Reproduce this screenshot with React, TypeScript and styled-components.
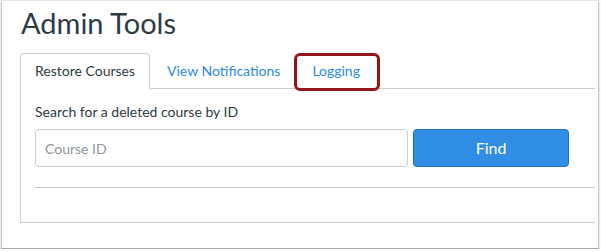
import React from 'react';
import styled, { createGlobalStyle } from 'styled-components';

const GlobalStyle = createGlobalStyle`
  html, body {
    margin: 0;
    padding: 0;
    background: #ffffff;
  }
  body {
    font-family: Lato, "Liberation Sans", sans-serif;
    -webkit-font-smoothing: antialiased;
  }
`;

const Frame = styled.div`
  box-sizing: border-box;
  margin-left: 1px;
  width: 598px;
  height: 249px;
  padding: 4px 3px 0 18px;
  background: #fff;
  border: 1px solid #c9c9c9;
  border-top-color: #e4e4e4;
  border-bottom-color: #a9a9a9;
  box-shadow: 0 1px 2px rgba(0, 0, 0, 0.25);
`;

const Title = styled.h1`
  margin: 0 0 0 1px;
  font-size: 29px;
  font-weight: 400;
  line-height: 36px;
  color: #2d3b45;
`;

const TabList = styled.div`
  display: flex;
  margin-top: 12px;
  border-bottom: 1px solid #c7cdd1;
`;

const Tab = styled.div<{ $active?: boolean }>`
  position: relative;
  margin-right: 2px;
  margin-bottom: -1px;
  padding: 7px 14px;
  font-size: 14px;
  line-height: 20px;
  color: ${p => (p.$active ? '#2d3b45' : '#2b8ae0')};
  border: 1px solid ${p => (p.$active ? '#c7cdd1' : 'transparent')};
  border-bottom-color: ${p => (p.$active ? '#fff' : 'transparent')};
  border-radius: 4px 4px 0 0;
  background: ${p => (p.$active ? '#fff' : 'transparent')};
`;

const Highlight = styled.span`
  position: absolute;
  top: -1px;
  left: -4px;
  right: -6px;
  bottom: -3px;
  border: 3px solid #931518;
  border-radius: 6px;
`;

const Panel = styled.div`
  box-sizing: border-box;
  height: 134px;
  padding: 13px 0 0 14px;
  border-left: 1px solid #c7cdd1;
  border-bottom: 1px solid #c7cdd1;
`;

const Label = styled.div`
  font-size: 14px;
  line-height: 20px;
  color: #2d3b45;
  margin-bottom: 7px;
`;

const SearchRow = styled.div`
  display: flex;
  gap: 5px;
`;

const Input = styled.input`
  box-sizing: border-box;
  width: 373px;
  height: 38px;
  padding: 0 9px;
  border: 1px solid #c7cdd1;
  border-radius: 4px;
  font-family: inherit;
  font-size: 14px;
  color: #2d3b45;
  outline: none;

  &::placeholder {
    color: #8b969e;
  }
`;

const FindButton = styled.button`
  box-sizing: border-box;
  width: 156px;
  height: 38px;
  padding: 0;
  background: #2f8ee3;
  border: 1px solid #2170b8;
  border-radius: 4px;
  color: #fff;
  font-family: inherit;
  font-size: 16px;
  line-height: 36px;
  cursor: pointer;
`;

const Divider = styled.hr`
  margin: 20px 0 0;
  border: 0;
  border-top: 1px solid #c7cdd1;
`;

const App: React.FC = () => (
  <>
    <GlobalStyle />
    <Frame>
      <Title>Admin Tools</Title>
      <TabList>
        <Tab $active>Restore Courses</Tab>
        <Tab>View Notifications</Tab>
        <Tab>
          Logging
          <Highlight />
        </Tab>
      </TabList>
      <Panel>
        <Label>Search for a deleted course by ID</Label>
        <SearchRow>
          <Input placeholder="Course ID" />
          <FindButton>Find</FindButton>
        </SearchRow>
        <Divider />
      </Panel>
    </Frame>
  </>
);

export default App;
